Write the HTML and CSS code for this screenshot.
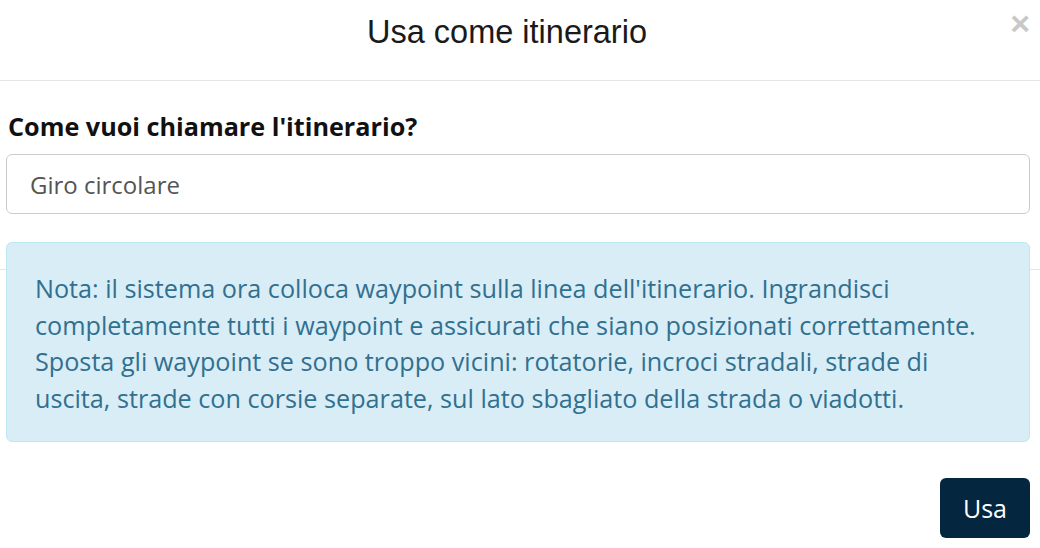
FILE: index.html
```html
<!DOCTYPE html>
<html lang="it">
<head>
<meta charset="utf-8">
<title>Usa come itinerario</title>
<link rel="stylesheet" href="styles.css">
</head>
<body>
<div class="modal">
  <div class="modal-header">
    <h4 class="modal-title">Usa come itinerario</h4>
    <button class="close" type="button">&times;</button>
  </div>
  <div class="modal-body">
    <label class="label" for="name">Come vuoi chiamare l'itinerario?</label>
    <input class="input" id="name" type="text" value="Giro circolare">
    <div class="alert-wrap">
      <div class="alert">Nota: il sistema ora colloca waypoint sulla linea dell'itinerario. Ingrandisci completamente tutti i waypoint e assicurati che siano posizionati correttamente. Sposta gli waypoint se sono troppo vicini: rotatorie, incroci stradali, strade di uscita, strade con corsie separate, sul lato sbagliato della strada o viadotti.</div>
    </div>
  </div>
  <div class="modal-footer">
    <button class="btn" type="button">Usa</button>
  </div>
</div>
</body>
</html>
```
FILE: styles.css
```css
html, body {
  margin: 0;
  padding: 0;
  background: #fff;
}
body {
  font-family: "Open Sans", "Liberation Sans", sans-serif;
  width: 1040px;
  height: 548px;
  overflow: hidden;
}
.modal {
  display: flex;
  flex-direction: column;
}
.modal-header {
  box-sizing: border-box;
  height: 81px;
  padding: 14px 26px 0 0;
  border-bottom: 1px solid #e5e5e5;
  text-align: center;
  position: relative;
}
.modal-title {
  margin: 0;
  font-family: "Liberation Sans", Arial, sans-serif;
  font-weight: normal;
  font-size: 32.5px;
  line-height: 36px;
  color: #1a1a1a;
}
.close {
  position: absolute;
  right: 10px;
  top: 3px;
  border: 0;
  background: none;
  padding: 0;
  font-family: "Liberation Sans", Arial, sans-serif;
  font-weight: bold;
  font-size: 34px;
  line-height: 40px;
  color: #c8c8c8;
  cursor: pointer;
}
.modal-body {
  padding: 30px 10px 0 6px;
  display: flex;
  flex-direction: column;
}
.label {
  font-weight: bold;
  font-size: 25.2px;
  color: #111;
  margin-left: 2px;
  line-height: 30px;
  margin-bottom: 13px;
}
.input {
  box-sizing: border-box;
  height: 60px;
  width: 1024px;
  border: 1px solid #cccccc;
  border-radius: 6px;
  padding: 0 23px;
  font-family: "Open Sans", sans-serif;
  font-size: 24px;
  color: #555;
  outline: none;
}
.alert-wrap {
  margin-top: 28px;
  margin-left: -6px;
  margin-right: -10px;
  padding: 0 10px 0 6px;
  background: linear-gradient(#fff 27px, #e5e5e5 27px, #e5e5e5 28px, #fff 28px);
}
.alert {
  box-sizing: border-box;
  width: 1024px;
  height: 200px;
  background: #d9edf7;
  border: 1px solid #bce8f1;
  border-radius: 6px;
  color: #31708f;
  font-size: 25.2px;
  line-height: 36.5px;
  padding: 27px 28px 0 28px;
}
.modal-footer {
  display: flex;
  justify-content: flex-end;
  padding: 36px 10px 0 0;
}
.btn {
  width: 90px;
  height: 60px;
  background: #04263f;
  color: #fff;
  border: 0;
  border-radius: 6px;
  font-family: "Open Sans", sans-serif;
  font-size: 25px;
  cursor: pointer;
}
```
